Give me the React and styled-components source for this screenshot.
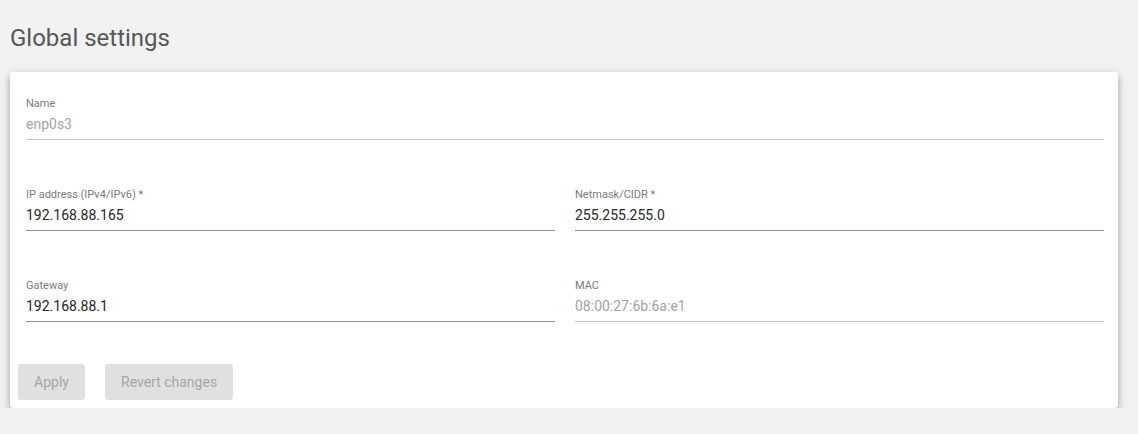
import React from "react";
import styled, { createGlobalStyle } from "styled-components";

const GlobalStyle = createGlobalStyle`
  html, body {
    margin: 0;
    padding: 0;
    background: #f2f2f2;
    font-family: Roboto, "Liberation Sans", sans-serif;
  }
`;

const Page = styled.div`
  padding: 22px 20px 0 10px;
`;

const Title = styled.h1`
  margin: 0 0 18px 0;
  font-size: 24px;
  line-height: 32px;
  font-weight: 400;
  color: #575757;
`;

const Card = styled.div`
  background: #ffffff;
  border-radius: 3px;
  box-shadow: 0 3px 5px -1px rgba(0, 0, 0, 0.2), 0 5px 8px 0 rgba(0, 0, 0, 0.14),
    0 1px 12px 0 rgba(0, 0, 0, 0.12);
`;

const Form = styled.div`
  display: grid;
  grid-template-columns: 1fr 1fr;
  column-gap: 20px;
  row-gap: 48px;
  padding: 25px 14px 0 16px;
`;

const Field = styled.div`
  grid-column: ${(p) => (p.$wide ? "1 / span 2" : "auto")};
  display: flex;
  flex-direction: column;
`;

const Label = styled.label`
  font-size: 11px;
  line-height: 13px;
  color: #7a7a7a;
  margin-bottom: 4px;
`;

const Value = styled.div`
  font-size: 14px;
  line-height: 20px;
  padding-bottom: 5px;
  color: ${(p) => (p.$disabled ? "#a3a3a3" : "#262626")};
  border-bottom: 1px solid ${(p) => (p.$disabled ? "#c6c6c6" : "#8f8f8f")};
`;

const Actions = styled.div`
  display: flex;
  gap: 20px;
  padding: 42px 8px 8px 8px;
`;

const Button = styled.button`
  height: 36px;
  padding: 0 16px;
  min-width: 67px;
  border: none;
  border-radius: 3px;
  background: #e0e0e0;
  color: #a6a6a6;
  font-family: Roboto, "Liberation Sans", sans-serif;
  font-size: 14px;
  font-weight: 400;
  line-height: 34px;
  cursor: default;
`;

const fields = [
  { label: "Name", value: "enp0s3", disabled: true, wide: true },
  { label: "IP address (IPv4/IPv6) *", value: "192.168.88.165" },
  { label: "Netmask/CIDR *", value: "255.255.255.0" },
  { label: "Gateway", value: "192.168.88.1" },
  { label: "MAC", value: "08:00:27:6b:6a:e1", disabled: true },
];

export default function App() {
  return (
    <>
      <GlobalStyle />
      <Page>
        <Title>Global settings</Title>
        <Card>
          <Form>
            {fields.map((f) => (
              <Field key={f.label} $wide={f.wide}>
                <Label>{f.label}</Label>
                <Value $disabled={f.disabled}>{f.value}</Value>
              </Field>
            ))}
          </Form>
          <Actions>
            <Button disabled>Apply</Button>
            <Button disabled>Revert changes</Button>
          </Actions>
        </Card>
      </Page>
    </>
  );
}
